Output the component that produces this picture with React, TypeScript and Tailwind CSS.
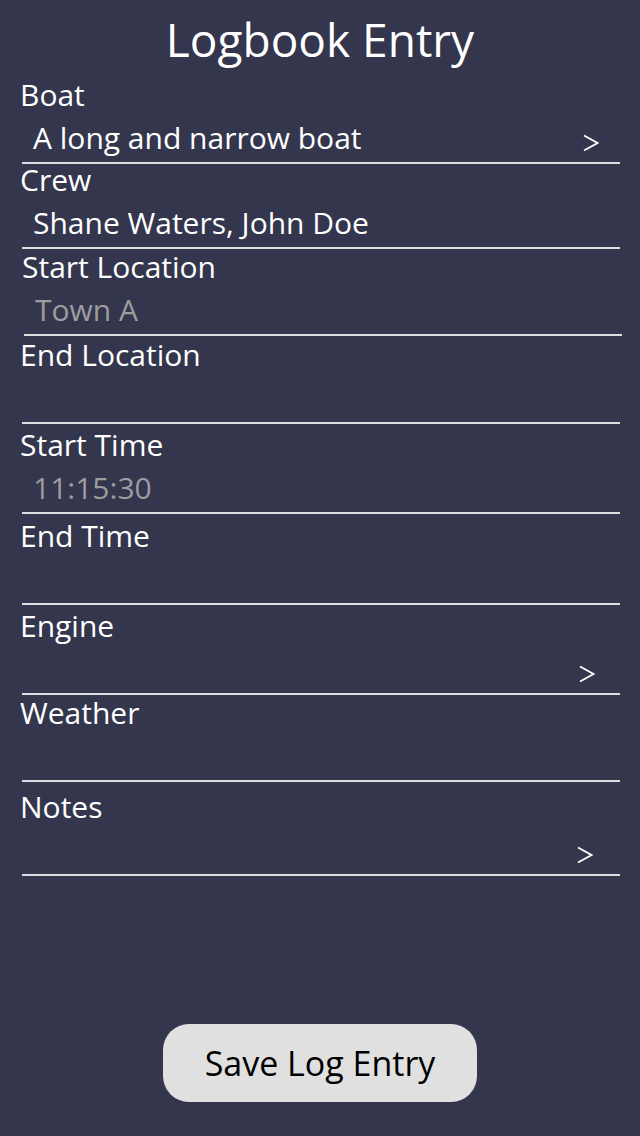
import React from "react";

type Field = {
  label: string;
  value?: string;
  muted?: boolean;
  chevron?: string;
  gap: string;
  shift?: string;
};

const fields: Field[] = [
  { label: "Boat", value: "A long and narrow boat", chevron: "mr-[21px]", gap: "mt-[17px]" },
  { label: "Crew", value: "Shane Waters, John Doe", gap: "mt-[1px]" },
  { label: "Start Location", value: "Town A", muted: true, gap: "mt-[3px]", shift: "ml-[2px]" },
  { label: "End Location", gap: "mt-[4px]" },
  { label: "Start Time", value: "11:15:30", muted: true, gap: "mt-[6px]" },
  { label: "End Time", gap: "mt-[7px]" },
  { label: "Engine", chevron: "mr-[25px]", gap: "mt-[6px]" },
  { label: "Weather", gap: "mt-[3px]" },
  { label: "Notes", chevron: "mr-[27px]", gap: "mt-[10px]" },
];

const Chevron = ({ className }: { className: string }) => (
  <svg
    className={`mt-[12px] ${className}`}
    width="16"
    height="18"
    viewBox="0 0 16 18"
    fill="none"
    stroke="#ffffff"
    strokeWidth="1.8"
  >
    <polyline points="1,1.5 14.5,9 1,16.5" />
  </svg>
);

const FieldRow = ({ field }: { field: Field }) => (
  <div className={`flex flex-col ${field.gap} ${field.shift ?? ""}`}>
    <div className="h-[30px] pl-[1px] text-[30px] leading-[30px] text-white whitespace-nowrap">
      {field.label}
    </div>
    <div className="mt-[12px] h-[32px] flex items-start justify-between ml-[3px] w-[598px]">
      <span
        className={`pl-[11px] text-[30px] leading-[32px] whitespace-nowrap ${
          field.muted ? "text-[#9d9d9f]" : "text-white"
        }`}
      >
        {field.value ?? ""}
      </span>
      {field.chevron && <Chevron className={field.chevron} />}
    </div>
    <div className="mt-[8px] h-[2px] ml-[3px] w-[598px] bg-[#dedee0]" />
  </div>
);

export default function App() {
  return (
    <div
      className="min-h-[1136px] w-[640px] bg-[#34364d] flex flex-col"
      style={{ fontFamily: '"Open Sans", "Noto Sans", sans-serif' }}
    >
      <h1 className="pt-[15px] h-[63px] text-center text-[46px] leading-[48px] text-white font-normal">
        Logbook Entry
      </h1>
      <div className="pl-[19px] flex flex-col">
        {fields.map((f) => (
          <FieldRow key={f.label} field={f} />
        ))}
      </div>
      <div className="flex-1" />
      <div className="flex justify-center mb-[34px]">
        <button className="w-[314px] h-[78px] rounded-[26px] bg-[#e0e0e0] text-black text-[34px] leading-none flex items-center justify-center">
          Save Log Entry
        </button>
      </div>
    </div>
  );
}
